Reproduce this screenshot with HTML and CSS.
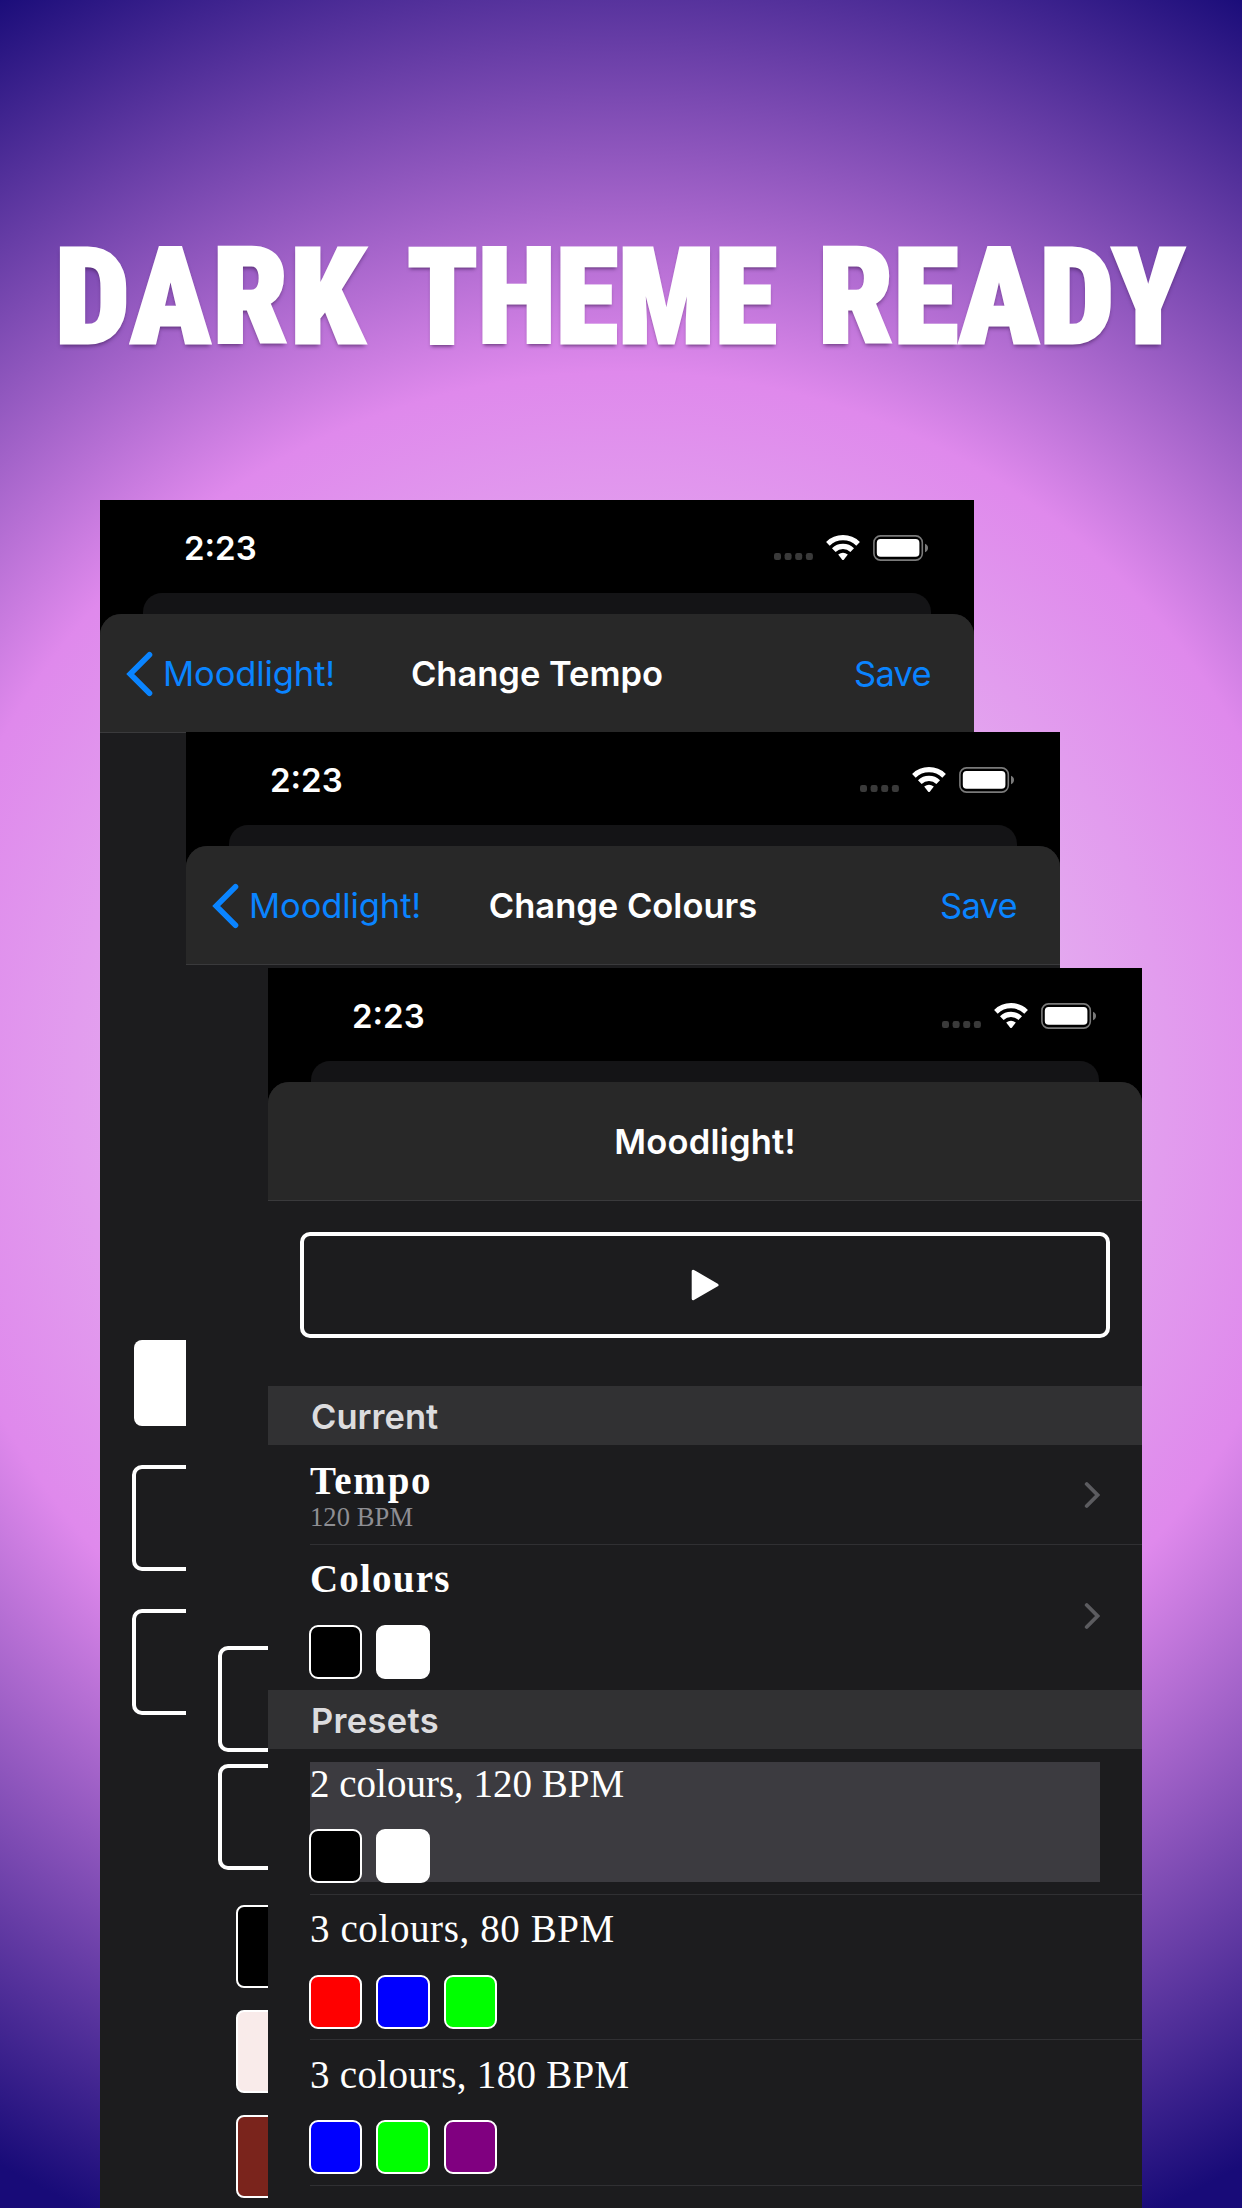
FILE: index.html
```
<!DOCTYPE html>
<html lang="en">
<head>
<meta charset="utf-8">
<title>Moodlight!</title>
<link rel="stylesheet" href="styles.css">
</head>
<body>
<svg class="defs" aria-hidden="true">
  <symbol id="status" viewBox="0 0 104 28">
    <g fill="#3a3a3a">
      <rect x="0" y="18" width="7" height="7" rx="2.2"/>
      <rect x="10.6" y="18" width="7" height="7" rx="2.2"/>
      <rect x="21.2" y="18" width="7" height="7" rx="2.2"/>
      <rect x="31.9" y="18" width="7" height="7" rx="2.2"/>
    </g>
  </symbol>
  <symbol id="wifi" viewBox="0 0 34 26">
    <g fill="none" stroke="#fff" stroke-width="5.2">
      <path d="M1.9 8.8a21.8 21.8 0 0 1 30.2 0"/>
      <path d="M7.8 15.1a13.2 13.2 0 0 1 18.4 0"/>
    </g>
    <path fill="#fff" d="M12.2 19.6Q17 15.8 21.8 19.6L18 24.4Q17 25.4 16 24.4Z"/>
  </symbol>
  <symbol id="battery" viewBox="0 0 56 26">
    <rect x=".9" y=".9" width="48.4" height="24.2" rx="6.6" fill="none" stroke="#7a7a7a" stroke-width="1.6"/>
    <rect x="3.8" y="4" width="42.6" height="17.8" rx="3.8" fill="#fff"/>
    <path fill="#7a7a7a" d="M52 8.8q3 1.3 3 4.2t-3 4.2z"/>
  </symbol>
  <symbol id="back" viewBox="0 0 28 46">
    <path d="M23.5 3.7 4.2 23l19.3 19.3" fill="none" stroke="#0a84ff" stroke-width="5.6" stroke-linecap="round" stroke-linejoin="miter"/>
  </symbol>
  <symbol id="more" viewBox="0 0 16 28">
    <path d="M2.7 3 13.6 14 2.7 25" fill="none" stroke="#5c5c60" stroke-width="3.8" stroke-linecap="round" stroke-linejoin="miter"/>
  </symbol>
</svg>

<main class="poster">
  <h1 class="headline"><span class="w1">DARK</span><span class="w2">THEME</span><span class="w3">READY</span></h1>

  <section class="screen tempo">
    <div class="statusbar"><span class="time">2:23</span><svg class="dots"><use href="#status"/></svg><svg class="wifi"><use href="#wifi"/></svg><svg class="battery"><use href="#battery"/></svg></div>
    <div class="behind"></div>
    <div class="sheet">
      <header class="nav"><a class="back"><svg><use href="#back"/></svg><span>Moodlight!</span></a><span class="title">Change Tempo</span><a class="save">Save</a></header>
      <div class="controls">
        <div class="field"></div>
        <div class="button"></div>
        <div class="button"></div>
      </div>
    </div>
  </section>

  <section class="screen colours">
    <div class="statusbar"><span class="time">2:23</span><svg class="dots"><use href="#status"/></svg><svg class="wifi"><use href="#wifi"/></svg><svg class="battery"><use href="#battery"/></svg></div>
    <div class="behind"></div>
    <div class="sheet">
      <header class="nav"><a class="back"><svg><use href="#back"/></svg><span>Moodlight!</span></a><span class="title">Change Colours</span><a class="save">Save</a></header>
      <div class="controls">
        <div class="button"></div>
        <div class="button"></div>
        <div class="well black"></div>
        <div class="well blush"></div>
        <div class="well brick"></div>
      </div>
    </div>
  </section>

  <section class="screen home">
    <div class="statusbar"><span class="time">2:23</span><svg class="dots"><use href="#status"/></svg><svg class="wifi"><use href="#wifi"/></svg><svg class="battery"><use href="#battery"/></svg></div>
    <div class="behind"></div>
    <div class="sheet">
      <header class="nav"><span class="title wide">Moodlight!</span></header>
      <div class="button play"><svg viewBox="0 0 28 32"><path d="M2.2 2.2v27.6L26 16z" fill="#fff" stroke="#fff" stroke-width="3" stroke-linejoin="round"/></svg></div>
      <h2 class="group">Current</h2>
      <div class="row current">
        <div>
          <div class="name t">Tempo</div>
          <div class="detail">120 BPM</div>
        </div>
        <svg class="more"><use href="#more"/></svg>
      </div>
      <div class="row current second">
        <div>
          <div class="name c">Colours</div>
          <div class="swatches"><i class="black"></i><i class="white"></i></div>
        </div>
        <svg class="more"><use href="#more"/></svg>
      </div>
      <h2 class="group presets">Presets</h2>
      <div class="row preset"><div class="cell selected">
        <div class="label">2 colours, 120 BPM</div>
        <div class="swatches"><i class="black"></i><i class="white"></i></div>
      </div></div>
      <div class="row preset"><div class="cell">
        <div class="label l80">3 colours, 80 BPM</div>
        <div class="swatches"><i class="red"></i><i class="blue"></i><i class="green"></i></div>
      </div></div>
      <div class="row preset"><div class="cell">
        <div class="label l180">3 colours, 180 BPM</div>
        <div class="swatches"><i class="blue"></i><i class="green"></i><i class="purple"></i></div>
      </div></div>
    </div>
  </section>
</main>
</body>
</html>
```
FILE: styles.css
```
* { box-sizing: border-box; }
body { margin: 0; font-family: Inter, "Liberation Sans", sans-serif; }
.defs { display: none; }

.poster {
  position: relative;
  width: 1242px;
  height: 2208px;
  overflow: hidden;
  background: radial-gradient(circle at 621px 1078px, #ecdef5 0, #df89ec 706px, #180b78 1252px);
}

.headline {
  margin: 0;
  padding: 220px 0 0 55px;
  display: flex;
  font: 900 condensed 133px/155px Roboto, sans-serif;
  color: #fff;
  -webkit-text-stroke: 3px #fff;
  text-shadow: 0 3px 4px rgba(40, 10, 60, .6);
  white-space: nowrap;
}
.w1 { width: 352px; letter-spacing: 2px; }
.w2 { width: 411px; transform: scaleX(.96); transform-origin: left; }
.w3 { letter-spacing: .2px; }

/* Overlapping device screens */
.screen { position: absolute; width: 874px; height: 1720px; background: #000; }
.tempo { left: 100px; top: 500px; }
.colours { left: 186px; top: 732px; }
.home { left: 268px; top: 968px; }

.statusbar { height: 93px; padding: 35px 45px 0 84px; display: flex; align-items: flex-start; }
.time { margin-right: auto; padding-top: 1px; font-weight: 600; font-size: 33px; line-height: 25px; color: #fff; }
.dots { width: 104px; height: 28px; margin-right: -52px; }
.wifi { width: 34px; height: 26px; margin-right: 13px; }
.battery { width: 56px; height: 26px; }

.behind { height: 21px; margin: 0 43px; background: #141416; border-radius: 19px 19px 0 0; }
.sheet { height: 1606px; background: #1c1c1e; border-radius: 21px 21px 0 0; overflow: hidden; }
.nav {
  height: 119px;
  padding: 1px 43px 0 26px;
  display: grid;
  grid-template-columns: 1fr auto 1fr;
  align-items: center;
  background: #282828;
  border-bottom: 1px solid #3a3a3c;
  font-size: 34.5px;
  line-height: 118px;
}
.title { grid-column: 2; font-weight: 600; color: #fff; margin-left: 17px; }
.title.wide { letter-spacing: .2px; }
.back { display: flex; align-items: center; gap: 9px; color: #0a84ff; letter-spacing: -.1px; }
.back svg { width: 28px; height: 46px; }
.save { justify-self: end; color: #0a84ff; letter-spacing: -.7px; }

.button { width: 810px; height: 106px; border: 4px solid #fff; border-radius: 10px; }
.tempo .controls { padding: 607px 32px 0; }
.field { width: 806px; height: 86px; margin: 0 0 39px 2px; border-radius: 8px; background: #fff; }
.tempo .button + .button { margin-top: 38px; }
.colours .controls { padding: 681px 32px 0; }
.colours .button + .button { margin-top: 12px; }
.well { width: 774px; height: 83px; margin: 0 0 22px 18px; border: 2px solid #fff; border-radius: 8px; }
.button + .well { margin-top: 35px; }

.play { margin: 31px 32px 48px; display: flex; align-items: center; justify-content: center; }
.play svg { width: 28px; height: 32px; }

.group {
  margin: 0;
  height: 59px;
  padding: 1px 0 0 43px;
  background: #313133;
  color: #dcdcde;
  font-size: 34.5px;
  font-weight: 600;
  line-height: 59px;
}
.presets { letter-spacing: .3px; }

.row { margin-left: 42px; font-family: "Liberation Serif", serif; color: #fff; border-bottom: 1px solid #303033; }
.current { height: 100px; padding: 13px 42px 0 0; display: flex; justify-content: space-between; }
.second { height: 145px; padding-top: 11px; border-bottom: 0; }
.name { font-size: 39px; line-height: 46px; font-weight: 700; }
.name.t { letter-spacing: 1.8px; }
.name.c { letter-spacing: 1.2px; }
.detail { font-size: 26.5px; line-height: 26px; letter-spacing: .1px; color: #8e8e93; }
.more { width: 16px; height: 28px; margin-top: 23px; }
.second .more { margin-top: 46px; }

.preset { height: 145.7px; padding: 12.7px 42px 0 0; }
.cell { height: 120px; }
.selected { background: #3c3b40; }
.label { font-size: 39px; line-height: 44px; letter-spacing: 0; }
.l80 { letter-spacing: .6px; }
.l180 { letter-spacing: .3px; }

.swatches { display: flex; gap: 14px; margin: 22.6px 0 0 -1px; }
.preset .swatches { margin-top: 23.2px; }
.swatches i { width: 53.4px; height: 54px; border: 2px solid #fff; border-radius: 9px; }
.black { background: #000; }
.white { background: #fff; }
.red { background: #f00; }
.blue { background: #00f; }
.green { background: #0f0; }
.purple { background: #800080; }
.blush { background: #f9ebea; }
.brick { background: #7a241c; }
```
